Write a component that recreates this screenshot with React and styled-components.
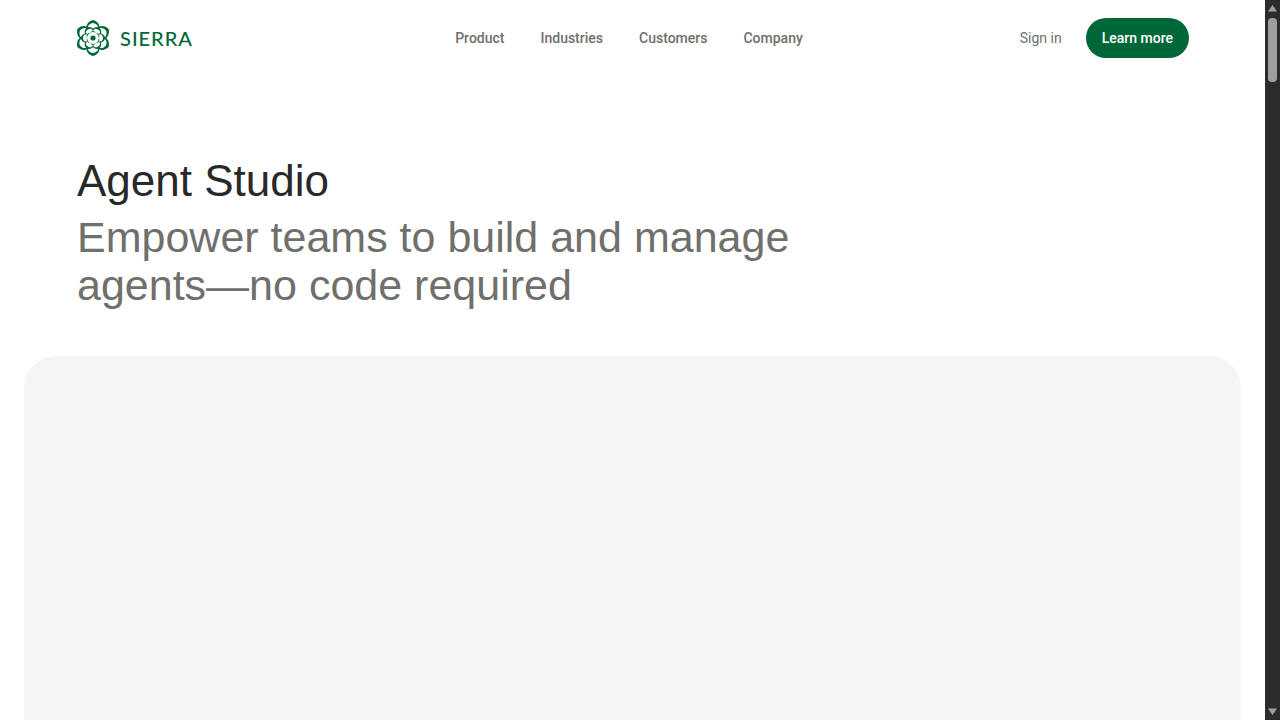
import React from 'react';
import styled, { createGlobalStyle } from 'styled-components';

const GlobalStyle = createGlobalStyle`
  *, *::before, *::after {
    box-sizing: border-box;
  }

  body {
    margin: 0;
    background: #fff;
    font-family: Roboto, 'Liberation Sans', sans-serif;
  }
`;

const Window = styled.div`
  display: flex;
  height: 100vh;
  overflow: hidden;
`;

const Page = styled.div`
  flex: 1;
  min-width: 0;
  display: flex;
  flex-direction: column;
`;

const Header = styled.header`
  display: grid;
  grid-template-columns: 1fr auto 1fr;
  align-items: center;
  padding: 18px 76px;
`;

const LogoLink = styled.a`
  display: flex;
  align-items: center;
  gap: 10px;
  color: #006838;
  text-decoration: none;
`;

const LogoMark = styled.svg`
  display: block;
  width: 34px;
  height: 38px;
`;

const LogoName = styled.span`
  font-family: Lato, sans-serif;
  font-size: 20px;
  font-weight: 500;
  line-height: 24px;
  letter-spacing: 1px;
`;

const Nav = styled.nav`
  display: flex;
  gap: 36px;
  padding-right: 7px;
`;

const NavLink = styled.a`
  color: #6f6f6c;
  font-size: 14px;
  font-weight: ${({ $light }) => ($light ? 400 : 500)};
  line-height: 20px;
  text-decoration: none;
`;

const Actions = styled.div`
  display: flex;
  align-items: center;
  justify-content: flex-end;
  gap: 24px;
`;

const PrimaryButton = styled.button`
  height: 40px;
  padding: 0 16px;
  border: 0;
  border-radius: 20px;
  background: #006838;
  color: #fff;
  font-family: inherit;
  font-size: 14px;
  font-weight: 500;
  line-height: 20px;
  cursor: pointer;
`;

const Main = styled.main`
  flex: 1;
  display: flex;
  flex-direction: column;
`;

const Intro = styled.section`
  padding: 81px 77px 47px;
  font-family: 'Liberation Sans', Arial, sans-serif;
`;

const Title = styled.h1`
  margin: 0 0 8px;
  color: #292929;
  font-size: 44px;
  font-weight: 400;
  line-height: 48px;
`;

const Subtitle = styled.p`
  max-width: 740px;
  margin: 0;
  color: #6f6f6c;
  font-size: 43px;
  font-weight: 400;
  line-height: 48px;
`;

const Showcase = styled.section`
  flex: 1;
  margin: 0 24px;
  border-radius: 32px 32px 0 0;
  background: #f6f5f3;
`;

const ScrollTrack = styled.div`
  flex: none;
  display: flex;
  flex-direction: column;
  align-items: center;
  width: 15px;
  padding: 4px 0;
  background: #2c2c2c;
`;

const ScrollArrow = styled.svg`
  display: block;
  width: 11px;
  height: 8px;
  fill: #9f9f9f;
`;

const ScrollThumb = styled.div`
  width: 9px;
  height: 64px;
  margin: 6px 0 auto;
  border-radius: 4px;
  background: #9f9f9f;
`;

const navItems = ['Product', 'Industries', 'Customers', 'Company'];
const petalAngles = [0, 60, 120, 180, 240, 300];

const Logo = () => (
  <LogoMark viewBox="-17 -19 34 38" fill="currentColor" aria-hidden="true">
    {petalAngles.map(angle => (
      <g key={angle} transform={`rotate(${angle})`}>
        {/* outer petal, heavy at the tip */}
        <path d="M-6.2 -8.2C-8 -12.8 -4.2 -17 0 -18C4.2 -17 8 -12.8 6.2 -8.2L5.2 -8.4C6 -12 3.2 -14.6 0 -15C-3.2 -14.6 -6 -12 -5.2 -8.4Z" />
        {/* inner petal between two outer ones */}
        <path
          transform="rotate(30)"
          d="M-4.6 -6.4C-5.2 -9.2 -2.8 -11.8 0 -12.2C2.8 -11.8 5.2 -9.2 4.6 -6.4L3.6 -6.6C3.9 -8.8 2.2 -9.9 0 -10C-2.2 -9.9 -3.9 -8.8 -3.6 -6.6Z"
        />
        <path d="M-3 -5.2Q0 -8.8 3 -5.2Q0 -6.8 -3 -5.2Z" />
      </g>
    ))}
    <circle r="2.6" />
  </LogoMark>
);

const Scrollbar = () => (
  <ScrollTrack aria-hidden="true">
    <ScrollArrow viewBox="0 0 11 8">
      <path d="M5.5 1L10 7.5H1Z" />
    </ScrollArrow>
    <ScrollThumb />
    <ScrollArrow viewBox="0 0 11 8">
      <path d="M5.5 7L1 0.5H10Z" />
    </ScrollArrow>
  </ScrollTrack>
);

const App = () => (
  <>
    <GlobalStyle />
    <Window>
      <Page>
        <Header>
          <LogoLink href="#home">
            <Logo />
            <LogoName>SIERRA</LogoName>
          </LogoLink>
          <Nav>
            {navItems.map(item => (
              <NavLink key={item} href={`#${item.toLowerCase()}`}>{item}</NavLink>
            ))}
          </Nav>
          <Actions>
            <NavLink $light href="#sign-in">Sign in</NavLink>
            <PrimaryButton type="button">Learn more</PrimaryButton>
          </Actions>
        </Header>
        <Main>
          <Intro>
            <Title>Agent Studio</Title>
            <Subtitle>Empower teams to build and manage agents—no code required</Subtitle>
          </Intro>
          <Showcase />
        </Main>
      </Page>
      <Scrollbar />
    </Window>
  </>
);

export default App;
